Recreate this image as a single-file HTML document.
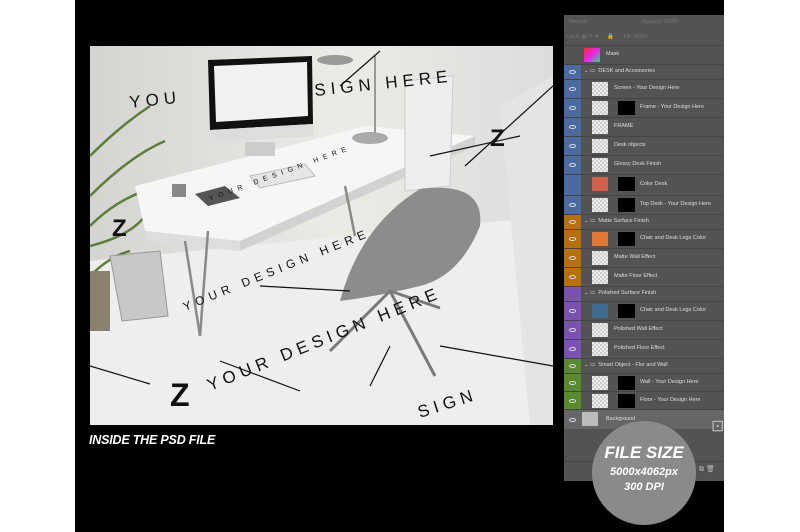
<!DOCTYPE html>
<html><head><meta charset="utf-8"><style>
*{margin:0;padding:0;box-sizing:border-box}
body{width:800px;height:532px;background:#fff;position:relative;overflow:hidden;font-family:"Liberation Sans",sans-serif}
#blk{position:absolute;left:75px;top:0;width:649px;height:532px;background:#000}
#photo{position:absolute;left:90px;top:46px;width:463px;height:379px;overflow:hidden}
#cap{position:absolute;left:89px;top:433px;color:#fff;font-weight:bold;font-style:italic;font-size:12.5px;letter-spacing:-0.2px}
#panel{position:absolute;left:564px;top:15px;width:160px;height:466px;background:#535353}
.row{position:absolute;left:0;width:160px;border-bottom:1px solid #444;font-size:5.5px;color:#ddd}
.eye{position:absolute;left:0;top:0;width:17px;height:100%}
.eye i{position:absolute;left:5px;top:50%;margin-top:-2px;width:7px;height:4px;border:1px solid #dde;border-radius:50%}
.th{position:absolute;top:2px;width:16px;height:14px;background:#eee;background-image:linear-gradient(45deg,#ccc 25%,transparent 25%,transparent 75%,#ccc 75%),linear-gradient(45deg,#ccc 25%,transparent 25%,transparent 75%,#ccc 75%);background-size:4px 4px;background-position:0 0,2px 2px}
.mk{position:absolute;top:2px;width:17px;height:14px;background:#000}
.lbl{position:absolute;top:50%;margin-top:-4px;white-space:nowrap}
#circ{position:absolute;left:592px;top:421px;width:104px;height:104px;border-radius:50%;background:#8a8a8a;color:#fff;text-align:center;font-weight:bold;font-style:italic}
</style></head><body>
<div id="blk"></div>
<div id="photo">
<svg width="463" height="379" viewBox="0 0 463 379">
<defs><linearGradient id="wall" x1="0" y1="0" x2="1" y2="0"><stop offset="0" stop-color="#d4d4d2"/><stop offset="0.55" stop-color="#ecebe6"/><stop offset="1" stop-color="#dcdcdc"/></linearGradient></defs>
<rect width="463" height="379" fill="url(#wall)"/>
<polygon points="0,215 463,170 463,379 0,379" fill="#eeeeee"/>
<polygon points="410,60 463,30 463,379 440,379" fill="#e4e4e4"/>
<!-- plant -->
<g stroke="#5d7d3a" stroke-width="2.5" fill="none"><path d="M0,150 Q40,110 75,95"/><path d="M0,180 Q30,150 70,140"/><path d="M0,110 Q30,80 60,60"/><path d="M0,200 Q40,190 55,170"/><path d="M0,230 Q20,210 40,205"/></g>
<rect x="0" y="225" width="20" height="60" fill="#8a8070"/>
<!-- trash -->
<polygon points="20,210 70,205 78,270 32,275" fill="#c8c8c8" stroke="#999"/>
<!-- desk -->
<polygon points="45,140 275,80 385,90 150,195 55,185" fill="#f6f6f6"/>
<polygon points="55,185 150,195 150,205 55,195" fill="#ddd"/>
<polygon points="150,195 385,90 385,100 150,205" fill="#d2d2d2"/>
<g stroke="#8a8a8a" stroke-width="2.5"><line x1="95" y1="195" x2="110" y2="290"/><line x1="110" y1="290" x2="118" y2="185"/><line x1="255" y1="140" x2="265" y2="190"/></g>
<!-- monitor -->
<polygon points="118,14 222,10 223,78 120,84" fill="#111"/>
<polygon points="124,20 217,16 218,70 126,76" fill="#f2f2f2"/>
<polygon points="120,84 223,78 223,90 121,96" fill="#ddd"/>
<rect x="155" y="96" width="30" height="14" fill="#ccc"/>
<!-- lamp -->
<ellipse cx="245" cy="14" rx="18" ry="5" fill="#999"/>
<line x1="285" y1="10" x2="285" y2="90" stroke="#999" stroke-width="2"/>
<ellipse cx="280" cy="92" rx="18" ry="6" fill="#aaa"/>
<!-- keyboard -->
<polygon points="160,130 215,118 225,130 170,142" fill="#e6e6e6" stroke="#bbb"/>
<polygon points="105,148 135,140 150,152 118,160" fill="#555"/>
<rect x="82" y="138" width="14" height="13" fill="#888"/>
<!-- frame -->
<polygon points="315,35 363,30 360,140 315,145" fill="#eee" stroke="#ccc"/>
<!-- chair -->
<path d="M250,255 Q270,180 330,143 Q395,135 390,180 Q370,230 330,240 Q290,250 250,255Z" fill="#8c8c8c"/>
<g stroke="#7a7a7a" stroke-width="3"><line x1="300" y1="245" x2="240" y2="305"/><line x1="300" y1="245" x2="345" y2="330"/><line x1="300" y1="245" x2="350" y2="262"/></g>
<!-- lines -->
<g stroke="#111" stroke-width="1.2"><line x1="250" y1="40" x2="290" y2="5"/><line x1="375" y1="120" x2="463" y2="40"/><line x1="0" y1="320" x2="60" y2="338"/><line x1="350" y1="300" x2="463" y2="320"/><line x1="280" y1="340" x2="300" y2="300"/><line x1="130" y1="315" x2="210" y2="345"/><line x1="170" y1="240" x2="260" y2="245"/><line x1="340" y1="110" x2="430" y2="90"/></g>
<g font-family="Liberation Sans" fill="#111" letter-spacing="5">
<text x="40" y="62" font-size="17" transform="rotate(-6 40 62)">YOU</text>
<text x="225" y="50" font-size="17" transform="rotate(-6 225 50)">SIGN HERE</text>
<text x="95" y="265" font-size="12" transform="rotate(-22 95 265)">YOUR DESIGN HERE</text>
<text x="120" y="345" font-size="17" transform="rotate(-22 120 345)">YOUR DESIGN HERE</text>
<text x="330" y="372" font-size="17" transform="rotate(-18 330 372)">SIGN</text>
<text x="120" y="155" font-size="7" transform="rotate(-20 120 155)">YOUR DESIGN HERE</text>
<text x="80" y="360" font-size="32" font-weight="bold" letter-spacing="0">Z</text>
<text x="22" y="190" font-size="24" font-weight="bold" letter-spacing="0">Z</text>
<text x="400" y="100" font-size="24" font-weight="bold" letter-spacing="0">Z</text>
</g>
</svg>
</div>
<div id="cap">INSIDE THE PSD FILE</div>
<div id="panel">
<div class="row" style="top:0;height:16px;border:0"><span class="lbl" style="left:5px;color:#777">Normal</span><span class="lbl" style="left:78px;color:#777">Opacity: 100%</span></div>
<div class="row" style="top:16px;height:15px"><span class="lbl" style="left:3px;color:#777">Lock: ▦ ✎ ✥ ⬚ 🔒 &nbsp;&nbsp;&nbsp;&nbsp; Fill: 100%</span></div>
<div class="row" style="top:31px;height:19px"><div class="th" style="left:20px;background:linear-gradient(135deg,#e33 0,#e2e 50%,#2d8 100%)"></div><span class="lbl" style="left:42px">Mask</span></div>
<div id="rows"></div>
<div style="position:absolute;left:0;top:395px;width:160px;height:19px;background:#666"><div class="eye" style="background:transparent"><i></i></div><div class="th" style="left:18px;background:#bbb"></div><span class="lbl" style="left:42px;font-size:5.5px;color:#ddd">Background</span><span class="lbl" style="left:147px;color:#bbb">⊡</span></div>
<div style="position:absolute;left:0;top:446px;width:160px;height:18px;border-top:1px solid #444;color:#bbb;font-size:7px"><span style="position:absolute;left:135px;top:3px">⧉ 🗑</span></div>
</div>
<div id="circ"><div style="font-size:17px;margin-top:22px">FILE SIZE</div><div style="font-size:11px;margin-top:3px">5000x4062px</div><div style="font-size:11px;margin-top:3px">300 DPI</div></div>
<script>
var R=[
["g","#4a6aa0",50,15,"DESK and Accessories"],
["l","#4a6aa0",65,19,"Screen - Your Design Here",0],
["l","#4a6aa0",84,19,"Frame - Your Design Here",1],
["l","#4a6aa0",103,19,"FRAME",0],
["l","#4a6aa0",122,19,"Desk objects",0],
["l","#4a6aa0",141,19,"Glossy Desk  Finish",0],
["l","#4a6aa0",160,21,"Color Desk",1,"#d0604a",1],
["l","#4a6aa0",181,19,"Top Desk - Your Design Here",1],
["g","#b8700c",200,15,"Matte Surface Finish"],
["l","#b8700c",215,19,"Chair and Desk Legs Color",1,"#e07838"],
["l","#b8700c",234,19,"Matte Wall Effect",0],
["l","#b8700c",253,19,"Matte Floor Effect",0],
["g","#7a52b0",272,15,"Polished Surface Finish",0,0,1],
["l","#7a52b0",287,19,"Chair and Desk Legs Color",1,"#3f6c8f"],
["l","#7a52b0",306,19,"Polished Wall Effect",0],
["l","#7a52b0",325,19,"Polished Floor Effect",0],
["g","#5a8a2e",344,15,"Smart Object - Flor and Wall"],
["l","#5a8a2e",359,18,"Wall - Your Design Here",1],
["l","#5a8a2e",377,18,"Floor - Your Design Here",1]];
var h="";R.forEach(function(r){var eye=r[7]?'':'<i></i>';
h+='<div class="row" style="top:'+r[2]+'px;height:'+r[3]+'px"><div class="eye" style="background:'+r[1]+'">'+eye+'</div>';
if(r[0]=="g"){h+='<span class="lbl" style="left:20px">⌄ ▭ &nbsp;'+r[4]+'</span>';}
else{var tb=r[6]?'background:'+r[6]:'';h+='<div class="th" style="left:28px;'+tb+'"></div>';var x=50;if(r[5]){h+='<div class="mk" style="left:54px"></div>';x=76;}h+='<span class="lbl" style="left:'+x+'px">'+r[4]+'</span>';}
h+='</div>';});document.getElementById("rows").innerHTML=h;
</script>
</body></html>
